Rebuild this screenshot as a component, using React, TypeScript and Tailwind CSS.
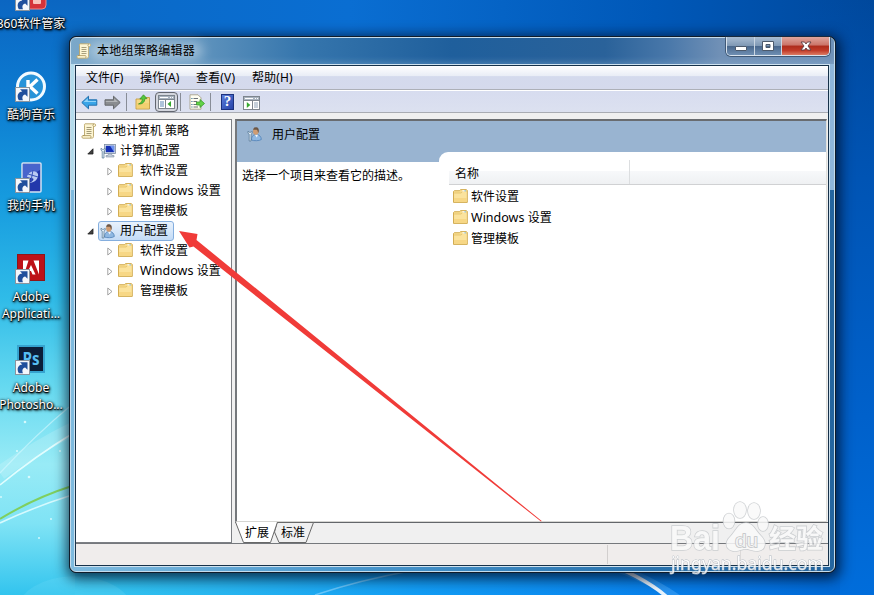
import React from "react";

const uiFont = "font-['Noto_Sans','Noto_Sans_CJK_SC',sans-serif]";

function Wallpaper() {
  return (
    <svg className="absolute inset-0" width="874" height="595" viewBox="0 0 874 595">
      <defs>
        <linearGradient id="sky" x1="0" x2="874" y1="0" y2="0" gradientUnits="userSpaceOnUse">
          <stop offset="0" stopColor="#0a68c4" />
          <stop offset=".4" stopColor="#0a6ed2" />
          <stop offset=".75" stopColor="#0058b8" />
          <stop offset="1" stopColor="#00489c" />
        </linearGradient>
        <linearGradient id="left" x1="0" x2="0" y1="0" y2="1">
          <stop offset="0" stopColor="#0b66c2" />
          <stop offset=".15" stopColor="#0c79cf" />
          <stop offset=".33" stopColor="#169ade" />
          <stop offset=".5" stopColor="#2fbbe8" />
          <stop offset=".65" stopColor="#66d9f0" />
          <stop offset=".78" stopColor="#98ebf6" />
          <stop offset=".88" stopColor="#7fe3f5" />
          <stop offset="1" stopColor="#32c4ee" />
        </linearGradient>
        <linearGradient id="bottom" x1="0" x2="1" y1="0" y2="0">
          <stop offset="0" stopColor="#36c6ef" />
          <stop offset=".2" stopColor="#27b5f0" />
          <stop offset=".45" stopColor="#129cf4" />
          <stop offset=".7" stopColor="#0a87ee" />
          <stop offset=".87" stopColor="#0473e0" />
          <stop offset="1" stopColor="#0068d4" />
        </linearGradient>
        <linearGradient id="right" x1="0" x2="0" y1="0" y2="1">
          <stop offset="0" stopColor="#0054b4" stopOpacity="0" />
          <stop offset=".3" stopColor="#0054b4" />
          <stop offset=".7" stopColor="#0061cb" />
          <stop offset="1" stopColor="#006ddb" />
        </linearGradient>
      </defs>
      <rect width="874" height="595" fill="url(#sky)" />
      <rect width="120" height="595" fill="url(#left)" />
      <rect x="120" width="754" height="60" fill="url(#sky)" />
      <rect x="800" width="74" height="595" fill="url(#right)" />
      <rect y="560" x="75" width="765" height="35" fill="url(#bottom)" />
      <g fill="none">
        <path d="M0 473 Q34 448 75 428" stroke="#fff" strokeOpacity=".16" strokeWidth="14" />
        <path d="M0 485 Q34 457 75 432" stroke="#e9ffff" strokeOpacity=".9" strokeWidth="1.6" />
        <path d="M0 473 Q34 436 75 402" stroke="#d5f9ff" strokeOpacity=".6" strokeWidth="1.2" />
        <path d="M0 519 Q34 498 72 486" stroke="#7fcf5e" strokeWidth="2" />
        <path d="M0 523 Q34 507 72 495" stroke="#dffcff" strokeOpacity=".9" strokeWidth="1.6" />
        <path d="M315 595 Q360 580 410 571" stroke="#8fd6ff" strokeOpacity=".65" strokeWidth="1.6" />
        <path d="M590 560 Q640 572 680 600" stroke="#5bb5ff" strokeOpacity=".4" strokeWidth="8" />
        <path d="M600 561 Q645 577 668 598" stroke="#fff" strokeOpacity=".9" strokeWidth="3.5" />
      </g>
      <ellipse cx="75" cy="612" rx="58" ry="36" fill="#7fe2fa" opacity=".2" />
      <g fill="#eaffff" opacity=".8">
        <circle cx="25" cy="422" r="1.3" />
        <circle cx="17" cy="451" r="1.1" />
        <circle cx="29" cy="477" r="1.3" />
        <circle cx="60" cy="451" r="1" />
        <circle cx="51" cy="519" r="1" />
        <circle cx="39" cy="538" r="1" />
        <circle cx="1" cy="497" r="1" />
      </g>
    </svg>
  );
}

function ShortcutBadge({ x, y }: { x: number; y: number }) {
  return (
    <g transform={`translate(${x} ${y})`}>
      <rect x=".5" y=".5" width="14" height="14" fill="#f4f7fb" stroke="#8a949e" />
      <path d="M3.800 13.300 C1.200 8.500 3.300 5 7.300 4.600 L5 2.300 L12.500 2.300 L12.500 9.800 L10.200 7.500 C7.300 8.300 6.800 10.500 8 13.300 Z" fill="#1f4f9c" />
    </g>
  );
}

function DesktopIcon({ pos, lines, children }: { pos: string; lines: string[]; children: React.ReactNode }) {
  return (
    <div className={`absolute left-[-9px] flex w-20 flex-col items-center ${pos}`}>
      <svg width="34" height="34" viewBox="0 0 34 34">{children}</svg>
      <div className="mt-[3px] text-center text-xs leading-[17px] whitespace-nowrap text-white [text-shadow:0_1px_1px_#000,1px_1px_2px_#000,0_0_3px_#000,1px_2px_3px_#000a]">
        {lines.map((l) => <div key={l}>{l}</div>)}
      </div>
    </div>
  );
}

function Folder() {
  return (
    <svg width="15" height="14" viewBox="0 0 15 14" className="shrink-0">
      <path d="M.5 2.500 L1.300 1.700 H6.500 L7.500 .6 H13.400 L14.300 1.500 V13.400 H.5 Z" fill="#f8dc8d" stroke="#cda546" strokeWidth=".9" />
      <path d="M1.200 4.300 H8 L9.500 2.900 H13.600 V12.800 H1.200 Z" fill="#fbe39d" />
      <path d="M1.200 9 H13.600 V12.800 H1.200 Z" fill="#f5d27a" opacity=".7" />
      <path d="M1.200 4 H8 L9.500 2.700" fill="none" stroke="#dcb860" strokeWidth=".6" />
      <rect x="9.300" y="1.300" width="3.300" height="1.100" fill="#fff" />
      <rect x="11.500" y="1.300" width="1.300" height="1.100" fill="#6fb5d8" />
    </svg>
  );
}

function Scroll() {
  return (
    <svg width="16" height="16" viewBox="0 0 16 16" className="shrink-0">
      <path d="M4 .8 H13.500 C15 .8 15 3.500 13.500 3.500 H12.500 V13.500 C12.300 15 11.500 15.200 10.500 15.200 H2 C.5 15.200 .5 12.500 2 12.500 H3.500 V3 C3.500 2 3.200 1.300 4 .8 Z" fill="#fdf5d2" stroke="#b9a468" strokeWidth=".9" />
      <path d="M12.500 3.500 C11.500 3 11.800 1.300 13 .9 M2 12.600 H9.500 C10.200 13.200 10 14.500 9.500 15" fill="none" stroke="#a58f55" strokeWidth=".8" />
      <path d="M5.500 4.500 H10.500 M5.500 6.500 H10.500 M5.500 8.500 H10.500 M5.500 10.500 H10.500" stroke="#8d8460" strokeWidth=".8" />
    </svg>
  );
}

function Wrench() {
  return <path d="M1 5.200 V7.200 L2.200 8.200 V15 H4 V8.200 L5.200 7.200 V5.200 L4 6.300 H2.200 Z" fill="#e3edf6" stroke="#4f7290" strokeWidth=".7" />;
}

function UserIcon() {
  return (
    <svg width="16" height="16" viewBox="0 0 16 16" className="shrink-0">
      <path d="M4.500 14 C4.500 10 6.500 8.500 9.500 8.500 C12.500 8.500 14.300 11 14.300 13.500 C12.500 15 6.500 15 4.500 14 Z" fill="#8fb8e2" stroke="#4f80b6" strokeWidth=".8" />
      <path d="M7.800 8.500 L9.800 11.500 L11 8.800 Z" fill="#f3f7fb" />
      <ellipse cx="8.800" cy="5.300" rx="2.700" ry="3.500" fill="#cf9c72" />
      <path d="M6.200 4.200 C6.200 1.500 8 1.100 9.300 1.200 C12 1.400 12.200 4.500 11.300 7 C10.700 5.500 10.700 4 9.800 3.700 C8.500 3.900 7.200 3.300 6.200 4.200 Z" fill="#6b5646" />
      <Wrench />
    </svg>
  );
}

function ComputerIcon() {
  return (
    <svg width="16" height="16" viewBox="0 0 16 16" className="shrink-0">
      <rect x="4.500" y="1.500" width="11" height="9" fill="#d8e1ec" stroke="#7d8da2" strokeWidth=".8" />
      <rect x="5.800" y="2.800" width="8.400" height="6.400" fill="#1731b5" />
      <path d="M10 2.800 H14.200 V9.200 Z" fill="#6d92ef" />
      <path d="M8.500 10.800 H11.500 L12 12.500 H14 V14 H6 V12.500 H8 Z" fill="#c3cedb" stroke="#7d8da2" strokeWidth=".6" />
      <Wrench />
    </svg>
  );
}

function Expanded() {
  return (
    <svg width="7" height="7" viewBox="0 0 7 7" className="shrink-0">
      <path d="M6 .8 V6 H.8 Z" fill="#404040" stroke="#222" strokeWidth=".8" />
    </svg>
  );
}

function Collapsed() {
  return (
    <svg width="6" height="9" viewBox="0 0 6 9" className="shrink-0">
      <path d="M.8 1 L5 4.500 L.8 8 Z" fill="#fff" stroke="#999" strokeWidth=".9" />
    </svg>
  );
}

function SettingName({ name }: { name: string }) {
  return name === "Windows" ? (
    <span className="leading-[18px]"><span className="text-[12.5px]">Windows </span>设置</span>
  ) : (
    <span className="leading-[18px]">{name}</span>
  );
}

const settings = ["软件设置", "Windows", "管理模板"];

function TreeChildren() {
  return (
    <>
      {settings.map((s) => (
        <div key={s} className="flex h-5 items-center pl-[31px]">
          <Collapsed />
          <div className="-mt-0.5 ml-[5px]"><Folder /></div>
          <div className="ml-[7px]"><SettingName name={s} /></div>
        </div>
      ))}
    </>
  );
}

function Tree() {
  return (
    <div className="w-[156px] shrink-0 overflow-hidden border border-l-0 border-[#7c7f84] bg-white pt-px whitespace-nowrap">
      <div className="flex h-5 items-center gap-[5px] pl-[5px]"><Scroll /><span>本地计算机 策略</span></div>
      <div className="flex h-5 items-center pl-[11px]">
        <Expanded /><div className="mr-1 ml-1.5"><ComputerIcon /></div><span>计算机配置</span>
      </div>
      <TreeChildren />
      <div className="flex h-5 items-center pl-[11px]">
        <Expanded />
        <div className="ml-1 flex h-5 w-[76px] items-center gap-1 rounded-[3px] border border-[#84aede] bg-gradient-to-b from-[#e9f2fc] to-[#c3dbf6] pl-px">
          <UserIcon /><span>用户配置</span>
        </div>
      </div>
      <TreeChildren />
    </div>
  );
}

function Titlebar() {
  return (
    <div className="flex h-[26px] items-start pl-[5px]">
      <div className="mt-[5px]"><Scroll /></div>
      <div className="relative ml-[5px] mt-1 leading-[18px] text-black">
        <div className="absolute -inset-x-2 inset-y-0 rounded-full bg-white/40 blur-[6px]" />
        <span className="relative tracking-[0.25px]">本地组策略编辑器</span>
      </div>
      <div className="mr-1 -mt-px ml-auto flex h-[19px] w-[104px] overflow-hidden rounded-b-[5px] border border-t-0 border-[#d9e3ee] shadow-[0_0_0_1px_#20344b99]">
        <div className="flex w-[28px] items-center justify-center border-r border-[#c9d5e2] bg-[linear-gradient(#a9bdd3_0%,#8099b5_48%,#48668b_50%,#6f8fb3_100%)]">
          <svg width="14" height="14"><rect x="1.500" y="7.500" width="11" height="4" rx=".5" fill="#fff" stroke="#4c596b" /></svg>
        </div>
        <div className="flex w-[27px] items-center justify-center border-r border-[#c9d5e2] bg-[linear-gradient(#a9bdd3_0%,#8099b5_48%,#48668b_50%,#6f8fb3_100%)]">
          <svg width="14" height="14"><path d="M1.500 2.500 H12.500 V11.500 H1.500 Z M5 5.500 V8.500 H9 V5.500 Z" fill="#fff" fillRule="evenodd" stroke="#4c596b" /></svg>
        </div>
        <div className="flex flex-1 items-center justify-center bg-[linear-gradient(#e0a69d_0%,#cb7469_45%,#ad2c1c_50%,#c13b29_75%,#dc7b64_100%)]">
          <svg width="14" height="14"><path d="M2 3 H5.500 L7 5 L8.500 3 H12 L9 7 L12 11 H8.500 L7 9 L5.500 11 H2 L5 7 Z" fill="#fff" stroke="#5d3c42" strokeWidth=".9" /></svg>
        </div>
      </div>
    </div>
  );
}

function MenuBar() {
  return (
    <div className="flex h-[23px] shrink-0 items-center bg-[linear-gradient(#ffffff_0%,#e9edf6_43%,#d4daed_46%,#d5daec_100%)] pl-2.5">
      <span className="w-[54px]">文件(F)</span>
      <span className="w-14 tracking-[0.15px]">操作(A)</span>
      <span className="w-14 tracking-[0.15px]">查看(V)</span>
      <span className="tracking-[0.1px]">帮助(H)</span>
    </div>
  );
}

function PaneIcon({ flip }: { flip?: boolean }) {
  return (
    <svg width="17" height="14" viewBox="0 0 17 14">
      <rect x=".5" y=".5" width="16" height="13" fill="#fff" stroke="#7d858e" />
      <rect x="1" y="1" width="15" height="3" fill="#a9b3bf" />
      <path d="M2 2.500 H10 M12 2.500 H13 M14 2.500 H15" stroke="#fff" />
      <path d="M1 4.500 H16" stroke="#7d858e" />
      {flip ? (
        <>
          <path d="M9.500 5 V13" stroke="#7d858e" />
          <path d="M11 7 H15 M11 9 H15 M11 11 H15" stroke="#8ca0b5" />
          <path d="M3.800 6 L7.300 9 L3.800 12 Z" fill="#35a82f" />
        </>
      ) : (
        <>
          <path d="M7.500 5 V13" stroke="#7d858e" />
          <path d="M2 7 H6 M2 9 H6 M2 11 H6" stroke="#5c86b5" />
          <path d="M13 6 L9.500 9 L13 12 Z" fill="#35a82f" />
        </>
      )}
    </svg>
  );
}

function Sep({ m }: { m: string }) {
  return <div className={`h-[18px] w-px bg-[#888d97] ${m}`} />;
}

function Toolbar() {
  return (
    <div className="flex h-[22px] shrink-0 items-center border-t border-white bg-[linear-gradient(#d7dcef,#dce1f0)] pl-[5px]">
      <svg width="17" height="15" viewBox="0 0 17 15" className="mt-px">
        <path d="M.8 7.500 L7.500 1.200 V4.800 H15.800 V10.200 H7.500 V13.800 Z" fill="#39a5e8" stroke="#2270ae" />
        <path d="M2.600 7 L6.800 3.200 V6 H15 V7 Z" fill="#8fd3f8" />
      </svg>
      <svg width="17" height="15" viewBox="0 0 17 15" className="mt-px ml-1.5">
        <path d="M16.200 7.500 L9.500 1.200 V4.800 H1 V10.200 H9.500 V13.800 Z" fill="#8a8d90" stroke="#66696c" />
        <path d="M14 7 L10.200 3.400 V6 H1.800 V7 Z" fill="#b2b5b7" />
      </svg>
      <Sep m="ml-[5px] mr-[8px]" />
      <svg width="16" height="16" viewBox="0 0 16 16" className="mt-px">
        <path d="M1 5 H6 L7.500 3.500 H14.500 V15 H1 Z" fill="#f6d983" stroke="#c79d42" strokeWidth=".9" />
        <path d="M1.800 9 H13.800 V14.300 H1.800 Z" fill="#f3cc68" opacity=".7" />
        <path d="M3.500 10 C6.500 9 7.200 7 7.200 5 L4.800 5 L8.500 .8 L12 4.600 L9.800 4.700 C9.800 8 7.500 10.300 3.500 10 Z" fill="#55c63d" stroke="#318c23" strokeWidth=".7" />
      </svg>
      <div className="ml-1 flex h-5 w-[23px] items-center justify-center rounded-[4px] border-[1.5px] border-[#62666f] bg-[#d3d6de] pt-px"><PaneIcon /></div>
      <Sep m="ml-[2px] mr-[8px]" />
      <svg width="16" height="16" viewBox="0 0 16 16" className="mt-px">
        <path d="M1 .8 H9 L12 3.800 V15.200 H1 Z" fill="#fffef2" stroke="#a7a28a" strokeWidth=".9" />
        <path d="M4.500 4.500 H9 M4.500 7.500 H8 M4.500 10.500 H8 M4.500 13 H9" stroke="#6c7178" />
        <path d="M2.300 4.500 H3.500 M2.300 7.500 H3.500 M2.300 10.500 H3.500 M2.300 13 H3.500" stroke="#3e7a9c" />
        <path d="M7.500 8 H11 V5.500 L15.500 9.500 L11 13.500 V11 H7.500 Z" fill="#63d348" stroke="#379b29" strokeWidth=".8" />
      </svg>
      <Sep m="ml-[5px] mr-[10px]" />
      <div className="flex h-4 w-[13px] items-center justify-center border border-[#1b317f] bg-gradient-to-br from-[#5b7ddb] to-[#2743a8] font-['Liberation_Serif',serif] text-[15px] leading-none font-bold text-white">?</div>
      <div className="mt-[2px] ml-[9px]"><PaneIcon flip /></div>
    </div>
  );
}

function Details() {
  return (
    <div className="mr-px flex min-h-0 flex-1 flex-col border-t-2 border-r border-b border-l-2 border-t-[#696c70] border-r-[#e0e0dc] border-b-[#d5d5d2] border-l-[#75787c] bg-white">
      <div className="flex flex-1">
        <div className="w-[202px] shrink-0">
          <div className="flex h-[41px] items-start gap-[9px] bg-[#99b4d1] pt-[5px] pl-[10px]">
            <UserIcon /><span className="leading-[17px]">用户配置</span>
          </div>
          <div className="pt-[5px] pl-[5px] leading-[18px] whitespace-nowrap">选择一个项目来查看它的描述。</div>
        </div>
        <div className="flex min-w-0 flex-1 flex-col bg-[linear-gradient(#99b4d1_41px,#fff_41px)] pt-[31px]">
          <div className="flex-1 rounded-tl-[9px] bg-white pt-2 pl-[10px]">
            <div className="flex h-[25px] border-b border-[#d0d1d3] bg-[linear-gradient(#ffffff_45%,#f7f8fa_47%,#eff1f3_100%)]">
              <div className="flex w-[181px] items-center border-r border-[#dcdee0] pt-[3px] pl-1.5">名称</div>
            </div>
            <div className="pt-px">
              {settings.map((s) => (
                <div key={s} className="flex h-[21px] items-center gap-[3px] pl-1"><div className="-mt-0.5"><Folder /></div><SettingName name={s} /></div>
              ))}
            </div>
          </div>
        </div>
      </div>
    </div>
  );
}

function Tabs() {
  return (
    <div className="relative flex h-[21px] shrink-0 border-t border-[#63666a] bg-[#f0f0f0] leading-[20px]">
      <svg className="absolute -top-px left-0" width="90" height="21" viewBox="0 0 90 21">
        <path d="M42 .5 H78.500 L71 20.500 H44 L39.500 10 Z" fill="#f0f0f0" stroke="#686868" />
        <path d="M.5 0 L8.500 20.500 H35.500 L42.500 0 Z" fill="#fff" />
        <path d="M.5 0 L8.500 20.500 H35.500 L42.500 0" fill="none" stroke="#686868" />
      </svg>
      <span className="relative ml-[10px] w-9">扩展</span>
      <span className="relative">标准</span>
    </div>
  );
}

function PolicyWindow() {
  return (
    <div className="absolute top-[36px] left-[69px] h-[537px] w-[767px] rounded-[7px] border border-[#101c2a] bg-black shadow-[1px_3px_13px_3px_rgba(0,10,30,0.75)]">
      <div className="flex h-full flex-col rounded-[6px] border border-[#c5dcec] bg-[linear-gradient(90deg,#7fbbdf_0%,#4694cb_40%,#2a73ae_75%,#24659f_100%)]">
        <div className="-mb-[150px] h-[152px] shrink-0 rounded-t-[5px] bg-[linear-gradient(90deg,#b5dcec_0%,#a4cbe2_50%,#8fb6da_100%)]" />
        <div className="relative -mt-[2px] flex min-h-0 flex-1 flex-col">
          <div className="rounded-t-[5px] bg-[linear-gradient(90deg,#7ba8c9_0%,#5f93bd_17%,#3676ad_30%,#1f5f9c_50%,#2a629a_70%,#4877a9_78%,#7090b6_85%,#6f91b8_100%)] shadow-[inset_0_-5px_6px_-3px_#9fc4de55]">
            <Titlebar />
          </div>
          <div className="ml-[3px] flex h-[503px] w-[756px] border border-[#cfe3f0]">
            <div className="flex w-full flex-col border border-[#17324a] bg-[#f0f0f0]">
              <MenuBar />
              <div className="h-px shrink-0 bg-[#adb0b8]" />
              <Toolbar />
              <div className="h-px shrink-0 bg-[#a9acb3]" />
              <div className="h-1.5 shrink-0" />
              <div className="flex h-[424px] shrink-0">
                <Tree />
                <div className="w-[3px] shrink-0" />
                <div className="flex min-w-0 flex-1 flex-col"><Details /><Tabs /></div>
              </div>
              <div className="flex flex-1 border-t border-[#75787c] bg-[#f0edec]">
                <div className="my-px w-[532px] border-r border-[#d2cfce]" />
                <div className="my-px w-[133px] border-r border-[#dcd9d8]" />
              </div>
            </div>
          </div>
        </div>
      </div>
    </div>
  );
}

function Watermark() {
  return (
    <svg className="absolute top-[490px] left-[660px]" width="180" height="95" viewBox="0 0 180 95">
      <g fill="#fafafa" stroke="#c6c9cc" strokeWidth="1.6" opacity=".85" paintOrder="stroke">
        <ellipse cx="80" cy="20" rx="6" ry="8" />
        <ellipse cx="94" cy="21" rx="6" ry="8" />
        <ellipse cx="69" cy="31" rx="5.500" ry="7.500" />
        <ellipse cx="103" cy="34" rx="5" ry="7" />
        <path d="M86 33 C93 33 95 40 101 46 C107 52 106 60 98 61 C91 61 90 59 86 59 C81 59 79 62 73 61 C65 59 65 52 70 47 C76 41 78 33 86 33 Z" />
        <text x="10" y="60" textLength="50" lengthAdjust="spacingAndGlyphs" fontFamily="Liberation Sans, Arial, sans-serif" fontWeight="bold" fontSize="35">Bai</text>
        <text x="109" y="58" textLength="54" lengthAdjust="spacingAndGlyphs" fontFamily="Noto Sans CJK SC, sans-serif" fontWeight="bold" fontSize="26">经验</text>
      </g>
      <text x="75" y="57" textLength="23" lengthAdjust="spacingAndGlyphs" fontFamily="Liberation Sans, Arial, sans-serif" fontSize="19" fill="#f2f2f2" stroke="#bfc2c5" strokeWidth="1.4" paintOrder="stroke">du</text>
      <text x="11" y="80" textLength="153" lengthAdjust="spacingAndGlyphs" fontFamily="Noto Sans, sans-serif" fontSize="17.5" fill="#fff" stroke="#aab3bc" strokeWidth=".9" paintOrder="stroke" opacity=".85">jingyan.baidu.com</text>
    </svg>
  );
}

export default function App() {
  return (
    <div className={`relative h-[595px] w-[874px] overflow-hidden bg-[#0a68c4] text-xs text-black ${uiFont}`}>
      <Wallpaper />
      <DesktopIcon pos="top-[-22px]" lines={["360软件管家"]}>
        <rect x="8" y="2" width="24" height="29" rx="4" fill="#d5333a" stroke="#f28a86" />
        <rect x="19" y="17" width="8" height="9" rx="1" fill="#f7c4bd" />
        <ShortcutBadge x={1} y={18} />
      </DesktopIcon>
      <DesktopIcon pos="top-[69px]" lines={["酷狗音乐"]}>
        <circle cx="17" cy="17.500" r="13.500" fill="#2793d9" stroke="#f2faff" strokeWidth="3" />
        <path d="M14 11 V24 M23.500 10.500 L16 17.500 L23.500 24.500" fill="none" stroke="#fff" strokeWidth="3.400" />
        <ShortcutBadge x={1} y={18} />
      </DesktopIcon>
      <DesktopIcon pos="top-[160px]" lines={["我的手机"]}>
        <rect x="8" y="3" width="19" height="29" rx="1" fill="#2238ab" stroke="#d4e2f4" strokeWidth="1.500" />
        <path d="M9 4 H26 V10 L9 20 Z" fill="#5977da" opacity=".7" />
        <path d="M13 17 C14 11 22 9 24 14 C25 19 20 23 15 23 C20 21 21 18 17 18 Z" fill="#b9cbf2" />
        <path d="M14 14 L24 17 M19 10 L17 21" stroke="#3555bb" />
        <ShortcutBadge x={1} y={18} />
      </DesktopIcon>
      <DesktopIcon pos="top-[251px]" lines={["Adobe", "Applicati..."]}>
        <rect x="3.500" y="3.500" width="27" height="26" fill="#bd1118" stroke="#8e1519" />
        <path d="M9 23.500 V9.500 H14.500 L10 23.500 Z M19.500 9.500 H25 V23.500 Z M17 14 L21.500 23.500 H18.500 L17 20 H14 Z" fill="#fff" />
        <ShortcutBadge x={1} y={18} />
      </DesktopIcon>
      <DesktopIcon pos="top-[342px]" lines={["Adobe", "Photosho..."]}>
        <rect x="4" y="4" width="26" height="26" fill="#0b1e38" stroke="#36a3cf" strokeWidth="2" />
        <text x="8.500" y="23" textLength="17" lengthAdjust="spacingAndGlyphs" fill="#56bdf2" fontFamily="Open Sans, sans-serif" fontWeight="bold" fontSize="17">Ps</text>
        <ShortcutBadge x={1} y={18} />
      </DesktopIcon>
      <PolicyWindow />
      <svg className="absolute inset-0" width="874" height="595" viewBox="0 0 874 595">
        <path d="M179 231 L197.500 234 L196.500 240 L541.700 521 L541 521.500 L193.500 246.500 L189.500 247.500 Z" fill="#f03b38" />
      </svg>
      <Watermark />
    </div>
  );
}
